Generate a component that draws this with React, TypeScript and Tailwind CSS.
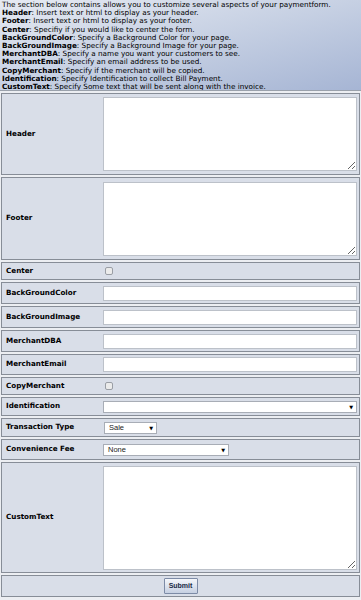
import React from 'react';

const terms: [string, string][] = [
  ['Header', 'Insert text or html to display as your header.'],
  ['Footer', 'Insert text or html to display as your footer.'],
  ['Center', 'Specifiy if you would like to center the form.'],
  ['BackGroundColor', 'Specify a Background Color for your page.'],
  ['BackGroundImage', 'Specify a Background Image for your page.'],
  ['MerchantDBA', 'Specify a name you want your customers to see.'],
  ['MerchantEmail', 'Specify an email address to be used.'],
  ['CopyMerchant', 'Specify if the merchant will be copied.'],
  ['Identification', 'Specify Identification to collect Bill Payment.'],
  ['CustomText', 'Specify Some text that will be sent along with the invoice.'],
];

const Row: React.FC<{ label?: string; h: string; children: React.ReactNode; center?: boolean }> = ({
  label,
  h,
  children,
  center,
}) => (
  <div className={`flex items-center border border-[#878d97] bg-[#d9dee8] mt-[2px] ${h}`}>
    {center ? (
      <div className="flex-1 flex justify-center">{children}</div>
    ) : (
      <>
        <div className="w-[101px] shrink-0 pl-[4px] font-bold text-[7.2px] text-black">{label}</div>
        <div className="flex-1 pr-[2px] flex items-center">{children}</div>
      </>
    )}
  </div>
);

const TextInput = () => (
  <input type="text" className="w-full h-[15px] bg-white border border-[#bcc1c9] outline-none" />
);

const Area: React.FC<{ h: string }> = ({ h }) => (
  <textarea className={`w-full ${h} bg-white border border-[#bcc1c9] outline-none block`} />
);

const Check = () => (
  <div className="ml-[2px] w-[8px] h-[8px] rounded-[2px] border border-[#9a9ea5] bg-[#ebebeb]" />
);

const Select: React.FC<{ w: string; value: string }> = ({ w, value }) => (
  <div className={`relative ${w} h-[12px] bg-white border border-[#a8adb6]`}>
    <span className="absolute left-[4px] top-[0px] text-[7.5px] leading-[10px] text-[#222] font-['Liberation_Sans',sans-serif]">
      {value}
    </span>
    <span className="absolute right-[3px] top-[0px] text-[5px] leading-[10px] text-black">▼</span>
  </div>
);

export default function App() {
  return (
    <div className="w-[361px] h-[600px] bg-[#eceef2] px-[1px] font-['DejaVu_Sans',sans-serif] text-black overflow-hidden">
      {/* Description */}
      <div className="h-[91px] -mx-[1px] px-[2px] pt-[1px] bg-gradient-to-br from-[#e6eaf2] via-[#c6d0e3] to-[#a6b5d4] border-b border-[#9aa1ab] text-[7.25px] leading-[8.2px] text-black whitespace-nowrap overflow-hidden">
        <div>The section below contains allows you to customize several aspects of your paymentform.</div>
        {terms.map(([t, d]) => (
          <div key={t}>
            <span className="font-bold">{t}</span>: {d}
          </div>
        ))}
      </div>

      <Row label="Header" h="h-[82px]">
        <Area h="h-[74px]" />
      </Row>
      <Row label="Footer" h="h-[83px]">
        <Area h="h-[74px]" />
      </Row>
      <Row label="Center" h="h-[18px]">
        <Check />
      </Row>
      <Row label="BackGroundColor" h="h-[22px]">
        <TextInput />
      </Row>
      <Row label="BackGroundImage" h="h-[22px]">
        <TextInput />
      </Row>
      <Row label="MerchantDBA" h="h-[22px]">
        <TextInput />
      </Row>
      <Row label="MerchantEmail" h="h-[21px]">
        <TextInput />
      </Row>
      <Row label="CopyMerchant" h="h-[18px]">
        <Check />
      </Row>
      <Row label="Identification" h="h-[19px]">
        <Select w="w-full" value="" />
      </Row>
      <Row label="Transaction Type" h="h-[19px]">
        <div className="pl-[1px]">
          <Select w="w-[53px]" value="Sale" />
        </div>
      </Row>
      <Row label="Convenience Fee" h="h-[21px]">
        <Select w="w-[126px]" value="None" />
      </Row>
      <Row label="CustomText" h="h-[111px]">
        <Area h="h-[104px]" />
      </Row>
      <Row h="h-[22px]" center>
        <button className="w-[34px] h-[16px] border border-[#7d8ba6] rounded-[1px] bg-gradient-to-b from-[#f4f6fa] to-[#c6d0e2] text-[7px] font-bold text-[#1a2a44] font-['Liberation_Sans',sans-serif]">
          Submit
        </button>
      </Row>
    </div>
  );
}
